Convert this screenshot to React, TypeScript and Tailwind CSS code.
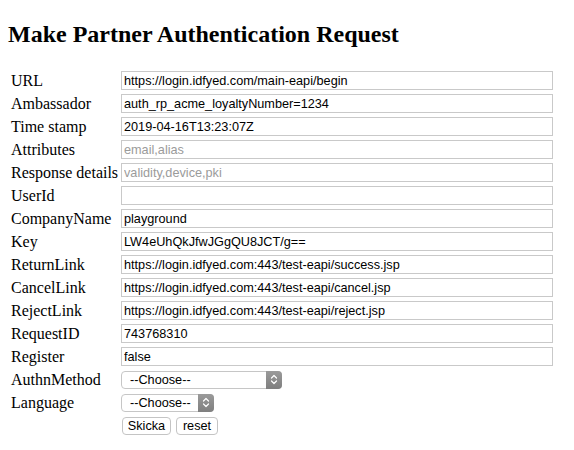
import React from "react";

const rows: { label: string; value?: string; placeholder?: string }[] = [
  { label: "URL", value: "https://login.idfyed.com/main-eapi/begin" },
  { label: "Ambassador", value: "auth_rp_acme_loyaltyNumber=1234" },
  { label: "Time stamp", value: "2019-04-16T13:23:07Z" },
  { label: "Attributes", placeholder: "email,alias" },
  { label: "Response details", placeholder: "validity,device,pki" },
  { label: "UserId", value: "" },
  { label: "CompanyName", value: "playground" },
  { label: "Key", value: "LW4eUhQkJfwJGgQU8JCT/g==" },
  { label: "ReturnLink", value: "https://login.idfyed.com:443/test-eapi/success.jsp" },
  { label: "CancelLink", value: "https://login.idfyed.com:443/test-eapi/cancel.jsp" },
  { label: "RejectLink", value: "https://login.idfyed.com:443/test-eapi/reject.jsp" },
  { label: "RequestID", value: "743768310" },
  { label: "Register", value: "false" },
];

function Stepper() {
  return (
    <div className="pointer-events-none absolute right-0 top-0 h-[18px] w-[16px] rounded-r-[4px] bg-gradient-to-b from-[#9a9a9a] to-[#7f7f7f] flex items-center justify-center">
      <svg width="8" height="11" viewBox="0 0 8 11" fill="none">
        <path d="M1.5 4 L4 1.5 L6.5 4" stroke="white" strokeWidth="1.2" strokeLinecap="round" strokeLinejoin="round" />
        <path d="M1.5 7 L4 9.5 L6.5 7" stroke="white" strokeWidth="1.2" strokeLinecap="round" strokeLinejoin="round" />
      </svg>
    </div>
  );
}

function FakeSelect({ width }: { width: string }) {
  return (
    <div className={`relative h-[18px] ${width} self-center overflow-hidden`}>
      <select className="block appearance-none m-0 w-full h-[18px] py-0 rounded-[4px] border border-[#c6c6c6] bg-white pl-[8px] pr-[18px] text-[12.7px] leading-[16px] text-black font-['Liberation_Sans',Arial,sans-serif]">
        <option>--Choose--</option>
      </select>
      <Stepper />
    </div>
  );
}

export default function App() {
  return (
    <div className="bg-white min-h-[450px] px-[8px] font-['Liberation_Serif','Times_New_Roman',serif] text-black">
      <h2 className="pt-[20px] mb-[23px] text-[24px] leading-[28px] font-bold">
        Make Partner Authentication Request
      </h2>
      <form className="grid grid-cols-[106px_432px] gap-x-[4px] gap-y-[4px] pl-[3px] auto-rows-[19px]">
        {rows.map((r) => (
          <React.Fragment key={r.label}>
            <label className="text-[16px] leading-[19px] whitespace-nowrap self-center">{r.label}</label>
            <input
              type="text"
              defaultValue={r.value}
              placeholder={r.placeholder}
              className="h-[19px] w-full border border-[#c9c9c9] bg-white px-[2px] py-0 text-[12.7px] leading-[17px] text-black placeholder:text-[#9b9b9b] font-['Liberation_Sans',Arial,sans-serif] outline-none"
            />
          </React.Fragment>
        ))}
        <label className="text-[16px] leading-[19px] self-center">AuthnMethod</label>
        <FakeSelect width="w-[161px]" />
        <label className="text-[16px] leading-[19px] self-center">Language</label>
        <FakeSelect width="w-[93px]" />
        <div />
        <div className="flex gap-[5px] items-center pl-[1px]">
          <button type="button" className="h-[18px] w-[49px] rounded-[4px] border border-[#c4c4c4] bg-white p-0 text-[12.7px] leading-[16px] font-['Liberation_Sans',Arial,sans-serif]">
            Skicka
          </button>
          <button type="reset" className="h-[18px] w-[42px] rounded-[4px] border border-[#c4c4c4] bg-white p-0 text-[12.7px] leading-[16px] font-['Liberation_Sans',Arial,sans-serif]">
            reset
          </button>
        </div>
      </form>
    </div>
  );
}
